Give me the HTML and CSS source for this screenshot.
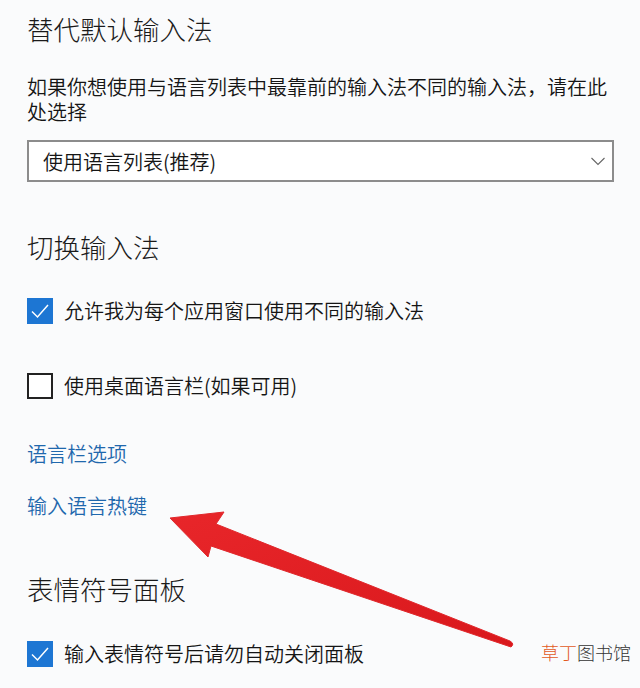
FILE: index.html
```html
<!DOCTYPE html>
<html lang="zh-CN">
<head>
  <meta charset="UTF-8">
  <title>输入法设置</title>
  <meta name="viewport" content="width=device-width, initial-scale=1">
  <link rel="stylesheet" href="styles.css">
</head>
<body>
  <div class="page">
    <h2 class="title first">替代默认输入法</h2>
    <p class="desc">如果你想使用与语言列表中最靠前的输入法不同的输入法，请在此处选择</p>
    <div class="select">
      <span>使用语言列表(推荐)</span>
      <svg class="chev" width="16" height="9" viewBox="0 0 16 9"><path d="M1.5 1 L8 7.5 L14.5 1" fill="none" stroke="#666" stroke-width="1.1"/></svg>
    </div>

    <h2 class="title second">切换输入法</h2>
    <label class="check row-a">
      <span class="box on"><svg width="26" height="26" viewBox="0 0 26 26"><path d="M5 13.5 L10.5 19 L21 7" fill="none" stroke="#fff" stroke-width="1.5"/></svg></span>
      <span>允许我为每个应用窗口使用不同的输入法</span>
    </label>
    <label class="check row-b">
      <span class="box"></span>
      <span>使用桌面语言栏(如果可用)</span>
    </label>

    <a class="link link-a" href="#">语言栏选项</a>
    <a class="link link-b" href="#">输入语言热键</a>

    <h2 class="title third">表情符号面板</h2>
    <label class="check row-c">
      <span class="box on"><svg width="26" height="26" viewBox="0 0 26 26"><path d="M5 13.5 L10.5 19 L21 7" fill="none" stroke="#fff" stroke-width="1.5"/></svg></span>
      <span>输入表情符号后请勿自动关闭面板</span>
    </label>

    <!-- pointer drawn over the settings list -->
    <svg class="arrow" width="640" height="688" viewBox="0 0 640 688">
      <defs>
        <linearGradient id="redfill" x1="0" y1="0" x2="1" y2="1">
          <stop offset="0" stop-color="#e8262a"/>
          <stop offset="1" stop-color="#d9181c"/>
        </linearGradient>
      </defs>
      <path d="M170 518 L224 512 L216 524 L510 641 Q515 644 511 647 L211 546 L208 557 Z" fill="url(#redfill)" stroke="#e0282c" stroke-width="1" stroke-linejoin="round"/>
    </svg>

    <div class="mark"><span class="mark-hl">草丁</span>图书馆</div>
  </div>
</body>
</html>
```

FILE: styles.css
```css
body {
  margin: 0;
  background: #fafbfc;
  font-family: "Noto Sans CJK SC", "Noto Sans", sans-serif;
  color: #151515;
}
.page {
  position: relative;
  width: 640px;
  height: 688px;
  padding: 0 26px 0 27px;
  box-sizing: border-box;
  overflow: hidden;
  display: flex;
  flex-direction: column;
  align-items: flex-start;
}
.title {
  margin: 0;
  font-size: 26.5px;
  line-height: 34px;
  font-weight: 300;
  color: #1a1a1a;
}
.first { margin-top: 12px; }
.second { margin-top: 48px; }
.third { margin-top: 54px; }
.desc {
  margin: 28px 0 0;
  font-size: 20px;
  line-height: 25px;
  font-weight: 350;
}
.select {
  margin-top: 16px;
  align-self: stretch;
  height: 38px;
  border: 2px solid #8c8c8c;
  background: #fff;
  display: flex;
  align-items: center;
  justify-content: space-between;
  padding: 0 6px 0 14px;
  font-size: 20px;
  font-weight: 350;
}
.chev { margin-top: 1px; }
.check {
  display: flex;
  align-items: center;
  gap: 11px;
  font-size: 20px;
  line-height: 26px;
  font-weight: 350;
}
.row-a { margin-top: 34px; }
.row-b { margin-top: 49px; }
.row-c { margin-top: 35px; }
.box {
  width: 26px;
  height: 26px;
  box-sizing: border-box;
  border: 2px solid #222;
  background: #fff;
}
.box.on {
  border: none;
  background: #1d76d3;
}
.box svg { display: block; }
.link {
  font-size: 20px;
  line-height: 25px;
  font-weight: 350;
  color: #1f68ad;
  text-decoration: none;
}
.link-a { margin-top: 42px; }
.link-b { margin-top: 27px; }
.arrow {
  position: absolute;
  left: 0;
  top: 0;
  pointer-events: none;
}
.mark {
  position: absolute;
  left: 541px;
  top: 640px;
  font-size: 18px;
  line-height: 24px;
  font-weight: 300;
  color: #333;
}
.mark-hl { color: #e25a1c; }
```
